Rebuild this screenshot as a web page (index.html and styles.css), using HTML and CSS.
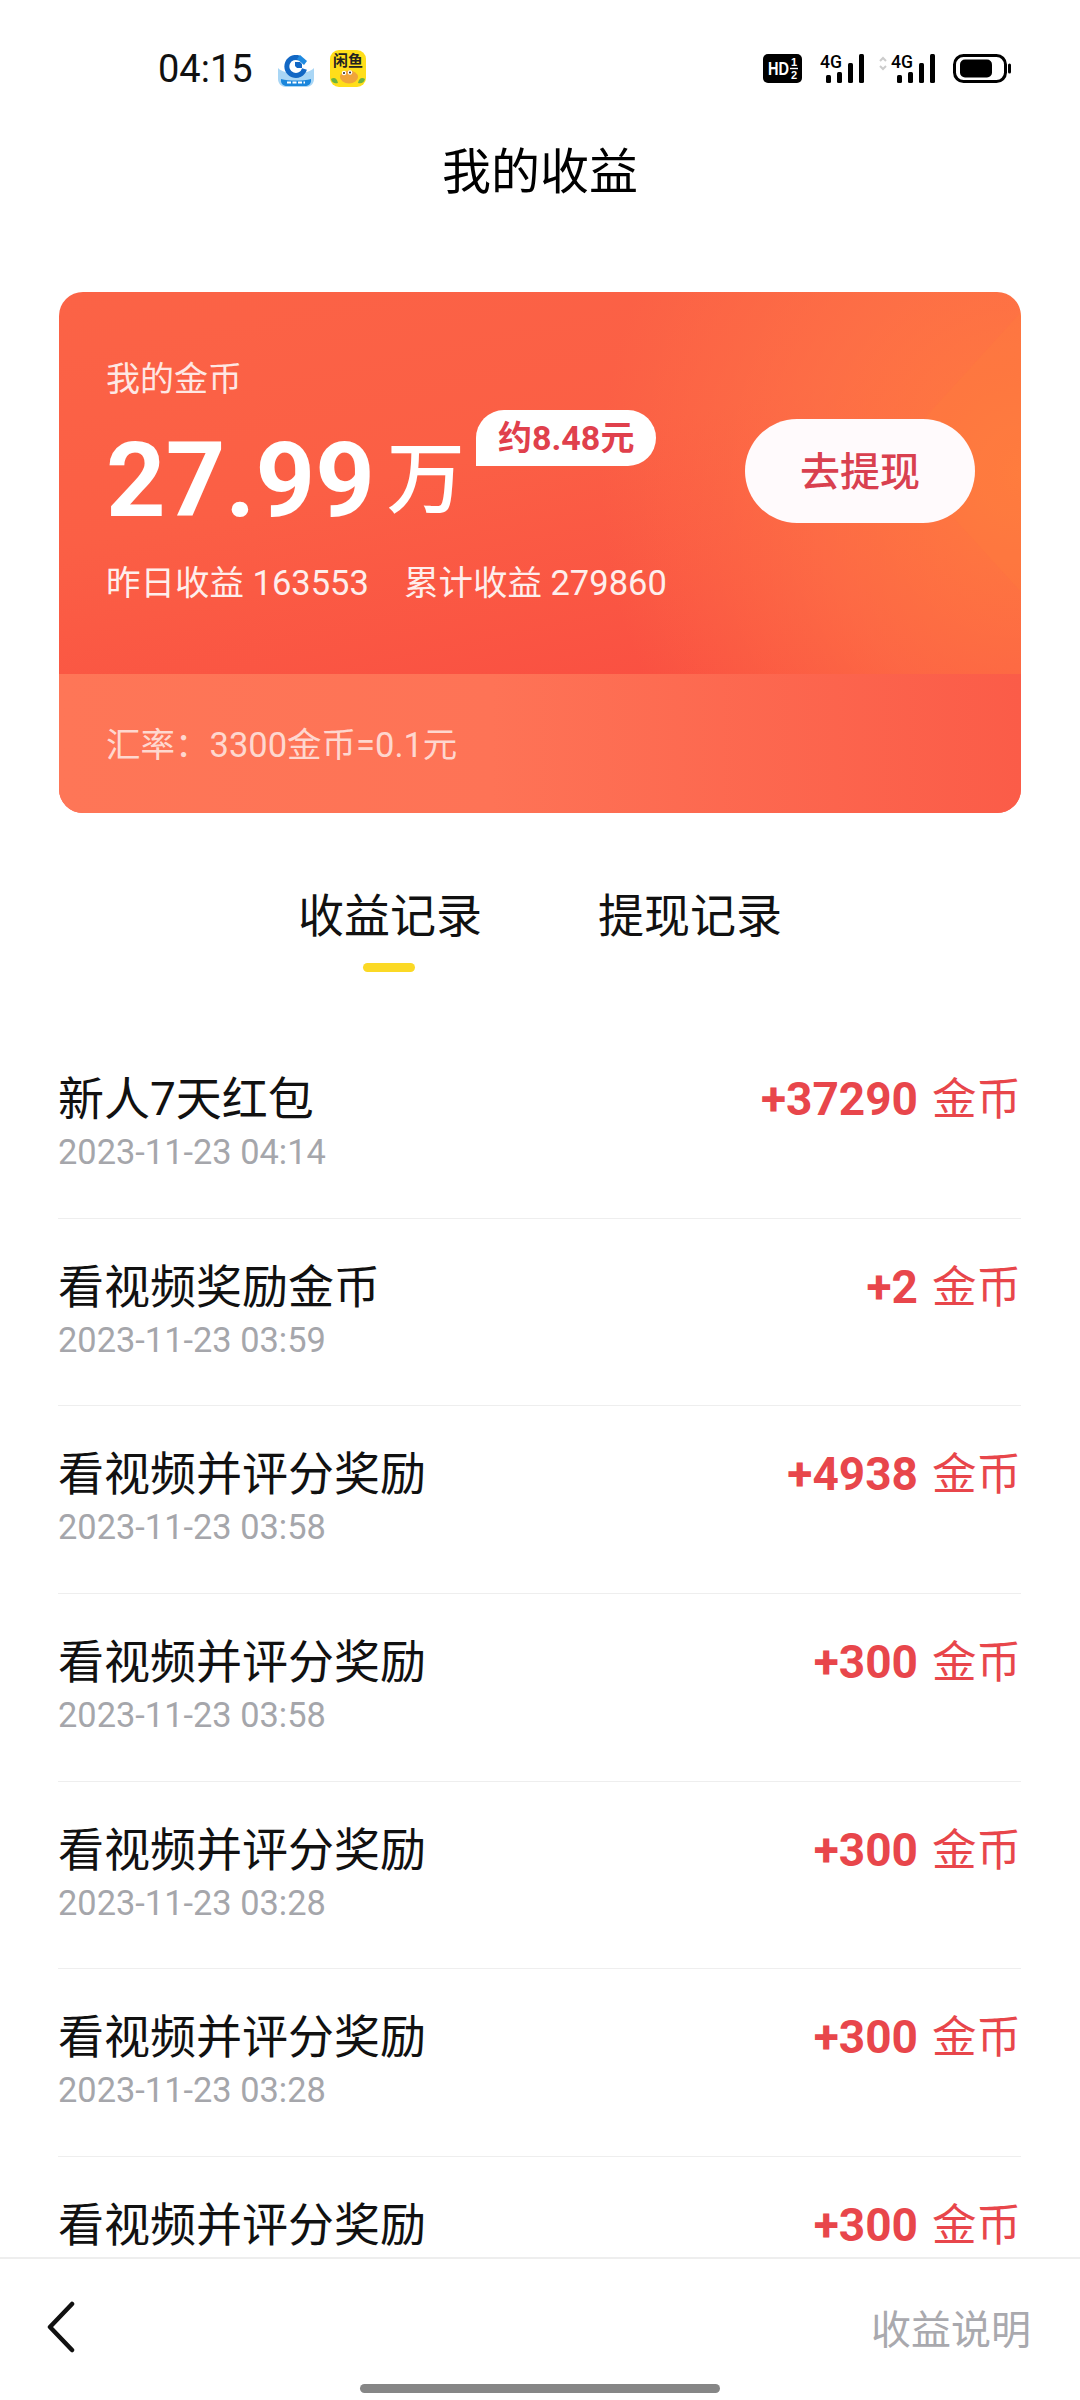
FILE: index.html
```html
<!DOCTYPE html>
<html lang="zh-CN">
<head>
  <meta charset="UTF-8" />
  <meta name="viewport" content="width=device-width, initial-scale=1.0"/>
  <title>我的收益</title>
  <link rel="stylesheet" href="styles.css">
</head>
<body>
<div class="page">

  <!-- Status bar -->
  <div class="status-bar">
    <div class="status-left">
      <span class="time">04:15</span>
      <svg class="app-icon bank-icon" viewBox="0 0 36 32">
        <path d="M0 13c6 7 30 7 36 0v11c0 5-4 8-8 8H8c-4 0-8-3-8-8z" fill="#a9d6f5"/>
        <path d="M3 24c8 2 22 2 30 0v2c0 3-3 5-6 5H9c-3 0-6-2-6-5z" fill="#1a86dc"/>
        <path d="M9 27.5h18" stroke="#fff" stroke-width="2" stroke-dasharray="4 1.5"/>
        <path d="M22 3.4A9 9 0 1 0 26.5 14" fill="none" stroke="#1267c4" stroke-width="5"/>
        <path d="M22 0l7 6-3 4-7-6z" fill="#1f8ae0"/>
        <path d="M17 7h5l2 2v4h-5l-2-2z" fill="#1267c4"/>
      </svg>
      <svg class="app-icon fish-icon" viewBox="0 0 36 37">
        <rect width="36" height="37" rx="9" fill="#ffde1a"/>
        <text x="3" y="16" class="fish-text">闲鱼</text>
        <ellipse cx="19" cy="27" rx="9" ry="6.5" fill="#f0a53a"/>
        <circle cx="14" cy="23" r="2.2" fill="#fff"/>
        <circle cx="20" cy="22.5" r="2.2" fill="#fff"/>
        <circle cx="14" cy="23" r="1" fill="#222"/>
        <circle cx="20" cy="22.5" r="1" fill="#222"/>
        <path d="M1 29c3-2 6-1 7 4-3 1-6 0-7-4zM35 29c-3-2-6-1-7 4 3 1 6 0 7-4z" fill="#6cb33f"/>
      </svg>
    </div>
    <div class="status-right">
      <svg class="hd-icon" viewBox="0 0 39 29">
        <rect width="39" height="29" rx="5" fill="#000"/>
        <text x="5" y="21" class="hd-text" textLength="21" lengthAdjust="spacingAndGlyphs">HD</text>
        <text x="28" y="12" class="hd-small">1</text>
        <path d="M27 14.5h8" stroke="#fff" stroke-width="1.4"/>
        <text x="28" y="25" class="hd-small">2</text>
      </svg>
      <svg class="signal-icon" viewBox="0 -6 46 35">
        <text x="0" y="14" class="net-text" textLength="22" lengthAdjust="spacingAndGlyphs">4G</text>
        <rect x="6" y="21" width="5" height="8" rx="1.5"/>
        <rect x="17" y="18" width="5" height="11" rx="1.5"/>
        <rect x="28" y="9" width="5" height="20" rx="1.5"/>
        <rect x="39" y="0" width="5" height="29" rx="1.5"/>
      </svg>
      <svg class="signal-icon signal-second" viewBox="0 -6 57 35">
        <path d="M1 7l3-3 3 3M1 12l3 3 3-3" fill="none" stroke="#ccc" stroke-width="2"/>
        <text x="12" y="14" class="net-text" textLength="22" lengthAdjust="spacingAndGlyphs">4G</text>
        <rect x="18" y="21" width="5" height="8" rx="1.5"/>
        <rect x="29" y="18" width="5" height="11" rx="1.5"/>
        <rect x="40" y="9" width="5" height="20" rx="1.5"/>
        <rect x="51" y="0" width="5" height="29" rx="1.5"/>
      </svg>
      <svg class="battery-icon" viewBox="0 0 58 29">
        <rect x="1.5" y="1.5" width="51" height="26" rx="9" fill="none" stroke="#000" stroke-width="3"/>
        <rect x="7" y="5.5" width="32" height="18" rx="5" fill="#000"/>
        <rect x="55" y="9.5" width="3" height="10" rx="1.5" fill="#000"/>
      </svg>
    </div>
  </div>

  <!-- Title -->
  <h1 class="page-title">我的收益</h1>

  <!-- Coin card -->
  <section class="coin-card">
    <svg class="card-shapes" viewBox="0 0 962 382" preserveAspectRatio="none">
      <path d="M962 20L835 160L962 300z" fill="#ff7f3c" opacity="0.25"/>
    </svg>
    <div class="card-main">
      <div class="balance-col">
        <div class="card-label">我的金币</div>
        <div class="balance">
          <span class="balance-num">27.99</span>
          <span class="balance-unit">万</span>
          <span class="cash-tag">约8.48元</span>
        </div>
        <div class="card-stats">
          <span>昨日收益 163553</span>
          <span>累计收益 279860</span>
        </div>
      </div>
      <button class="withdraw-btn">去提现</button>
    </div>
    <div class="card-rate">汇率：3300金币=0.1元</div>
  </section>

  <!-- Tabs -->
  <div class="tabs">
    <div class="tab tab-active">收益记录</div>
    <div class="tab">提现记录</div>
  </div>

  <!-- Records -->
  <div class="record-list">
    <div class="record">
      <div>
        <div class="record-name">新人7天红包</div>
        <div class="record-time">2023-11-23 04:14</div>
      </div>
      <div class="record-amount"><b>+37290</b> 金币</div>
    </div>
    <div class="record">
      <div>
        <div class="record-name">看视频奖励金币</div>
        <div class="record-time">2023-11-23 03:59</div>
      </div>
      <div class="record-amount"><b>+2</b> 金币</div>
    </div>
    <div class="record">
      <div>
        <div class="record-name">看视频并评分奖励</div>
        <div class="record-time">2023-11-23 03:58</div>
      </div>
      <div class="record-amount"><b>+4938</b> 金币</div>
    </div>
    <div class="record">
      <div>
        <div class="record-name">看视频并评分奖励</div>
        <div class="record-time">2023-11-23 03:58</div>
      </div>
      <div class="record-amount"><b>+300</b> 金币</div>
    </div>
    <div class="record">
      <div>
        <div class="record-name">看视频并评分奖励</div>
        <div class="record-time">2023-11-23 03:28</div>
      </div>
      <div class="record-amount"><b>+300</b> 金币</div>
    </div>
    <div class="record">
      <div>
        <div class="record-name">看视频并评分奖励</div>
        <div class="record-time">2023-11-23 03:28</div>
      </div>
      <div class="record-amount"><b>+300</b> 金币</div>
    </div>
    <div class="record">
      <div>
        <div class="record-name">看视频并评分奖励</div>
      </div>
      <div class="record-amount"><b>+300</b> 金币</div>
    </div>
  </div>

  <!-- Bottom bar -->
  <footer class="bottom-bar">
    <svg class="back-icon" viewBox="0 0 30 52">
      <path d="M26 3L4 26l22 23" fill="none" stroke="#111" stroke-width="4.5" stroke-linecap="round" stroke-linejoin="round"/>
    </svg>
    <span class="help-link">收益说明</span>
  </footer>
  <div class="home-row"><div class="home-bar"></div></div>

</div>
</body>
</html>
```

FILE: styles.css
```css
* {
  box-sizing: border-box;
}

body {
  margin: 0;
  background: #fff;
  font-family: Roboto, "Noto Sans CJK SC", sans-serif;
  color: #000;
}

.page {
  height: 2400px;
  display: flex;
  flex-direction: column;
  overflow: hidden;
}

/* Status bar */
.status-bar {
  height: 137px;
  flex-shrink: 0;
  display: flex;
  justify-content: space-between;
  padding: 50px 69px 0 158px;
}
.status-left,
.status-right {
  display: flex;
  align-items: flex-start;
}
.time {
  font-size: 38px;
  line-height: 38px;
  width: 120px;
  color: #111;
}
.app-icon {
  display: block;
}
.bank-icon {
  width: 36px;
  height: 32px;
  margin-top: 5px;
  margin-right: 16px;
}
.fish-icon {
  width: 36px;
  height: 37px;
}
.fish-text {
  font: 700 15px "Noto Sans CJK SC", sans-serif;
  fill: #222;
}
.status-right {
  padding-top: 4px;
}
.status-right svg {
  display: block;
  height: 29px;
}
.hd-icon {
  width: 39px;
  margin-right: 18px;
}
.hd-text {
  font: 700 19px "Liberation Sans", sans-serif;
  fill: #fff;
}
.hd-small {
  font: 700 11px "Liberation Sans", sans-serif;
  fill: #fff;
}
.status-right .signal-icon {
  width: 46px;
  height: 35px;
  margin-top: -6px;
  margin-right: 13px;
}
.status-right .signal-second {
  width: 57px;
  margin-right: 17px;
}
.net-text {
  font: 500 18px Roboto, sans-serif;
}
.battery-icon {
  width: 58px;
}

/* Title */
.page-title {
  margin: 0;
  height: 155px;
  flex-shrink: 0;
  text-align: center;
  font-size: 49px;
  font-weight: 400;
  line-height: 72px;
}

/* Coin card */
.coin-card {
  position: relative;
  margin: 0 59px;
  height: 521px;
  flex-shrink: 0;
  border-radius: 24px;
  overflow: hidden;
  color: #fff;
  background:
    radial-gradient(ellipse 420px 460px at 100% 35%, rgba(255,125,62,0.95), rgba(255,120,70,0.6) 50%, rgba(255,110,70,0)),
    linear-gradient(168deg, #fb6346 0%, #fb5f45 35%, #f94840 92%);
}
.card-shapes {
  position: absolute;
  top: 0;
  left: 0;
  width: 100%;
  height: 382px;
}
.card-main {
  position: relative;
  height: 382px;
  display: flex;
  justify-content: space-between;
  align-items: flex-start;
  padding: 0 46px 0 47px;
}
.card-label {
  margin-top: 64px;
  font-size: 34px;
  line-height: 46px;
  opacity: 0.85;
}
.balance {
  position: relative;
  display: flex;
  align-items: center;
  height: 122px;
  line-height: 122px;
  margin-top: 18px;
}
.balance-num {
  font-size: 104px;
  font-weight: 700;
}
.balance-unit {
  margin-left: 12px;
  font-size: 78px;
  font-weight: 500;
}
.cash-tag {
  position: absolute;
  left: 370px;
  top: -10px;
  height: 56px;
  padding: 0 22px;
  border-radius: 28px 28px 28px 0;
  background: #fff;
  color: #e0404c;
  font-size: 34px;
  font-weight: 700;
  line-height: 56px;
  white-space: nowrap;
}
.card-stats {
  display: flex;
  gap: 35px;
  margin-top: 17px;
  font-size: 34.5px;
  line-height: 48px;
  opacity: 0.9;
}
.withdraw-btn {
  margin-top: 127px;
  width: 230px;
  height: 104px;
  padding: 0 0 5px;
  border: none;
  border-radius: 52px;
  background: #fffafc;
  color: #d9404f;
  font-family: inherit;
  font-size: 40px;
  font-weight: 500;
}
.card-rate {
  position: relative;
  height: 139px;
  padding: 47px 47px 0;
  font-size: 34.5px;
  line-height: 48px;
  color: rgba(255,255,255,0.72);
  background: linear-gradient(90deg, #fe7657, #fe7356 45%, #fb5c48 100%);
}

/* Tabs */
.tabs {
  height: 218px;
  flex-shrink: 0;
  display: flex;
  justify-content: center;
  gap: 116px;
  padding-top: 72px;
}
.tab {
  position: relative;
  font-size: 46px;
  line-height: 62px;
  color: #111;
}
.tab-active::after {
  content: "";
  position: absolute;
  left: 65px;
  top: 78px;
  width: 52px;
  height: 9px;
  border-radius: 5px;
  background: #fbd925;
}

/* Records */
.record-list {
  flex: 1;
  min-height: 0;
  overflow: hidden;
  padding: 0 59px 0 58px;
}
.record {
  height: 187.7px;
  display: flex;
  justify-content: space-between;
  align-items: flex-start;
  padding-top: 36px;
  border-bottom: 1px solid #eee;
}
.record-name {
  font-size: 46px;
  line-height: 64px;
  color: #111;
}
.record-time {
  margin-top: -1px;
  font-size: 34.4px;
  line-height: 44px;
  color: #a5a6ab;
}
.record-amount {
  font-size: 44.5px;
  line-height: 64px;
  color: #e8464b;
}
.record-amount b {
  margin-right: 3px;
  font-size: 46px;
  font-weight: 700;
}

/* Bottom bar */
.bottom-bar {
  height: 126px;
  flex-shrink: 0;
  display: flex;
  justify-content: space-between;
  align-items: center;
  padding: 12px 49px 0 46px;
  border-top: 2px solid #eee;
  background: #fff;
}
.back-icon {
  width: 30px;
  height: 52px;
}
.help-link {
  font-size: 40px;
  color: #a9a9ae;
}
.home-row {
  height: 17px;
  flex-shrink: 0;
  display: flex;
  justify-content: center;
}
.home-bar {
  width: 360px;
  height: 9px;
  margin-top: 1px;
  border-radius: 5px;
  background: #868686;
}
```
